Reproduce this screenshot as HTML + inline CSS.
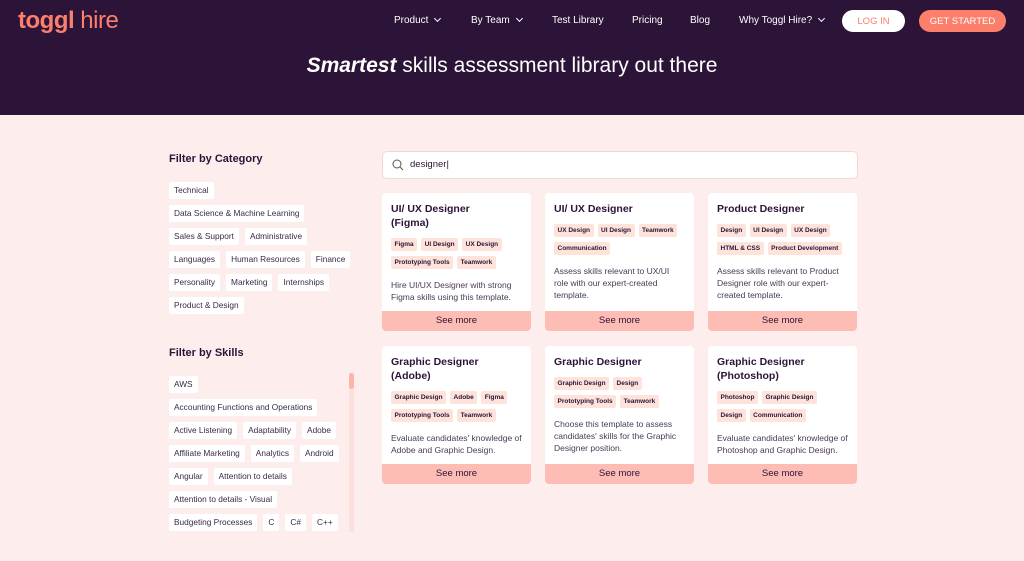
<!DOCTYPE html>
<html><head><meta charset="utf-8">
<style>
*{box-sizing:border-box;margin:0;padding:0}
body{width:1024px;height:561px;overflow:hidden;background:#fdeeed;font-family:"Liberation Sans",sans-serif;color:#2c1338;position:relative}
.hdr{position:absolute;left:0;top:0;width:1024px;height:115px;background:#2c1338}
.logo{position:absolute;left:18px;top:7px;font-size:24px;color:#fc7f6c;letter-spacing:-0.5px}
.logo b{font-weight:900}
.nav{position:absolute;top:15px;font-size:10px;color:#fff}
.chev{display:inline-block;width:5px;height:5px;border-right:1.3px solid #fff;border-bottom:1.3px solid #fff;transform:rotate(45deg);margin-left:7px;position:relative;top:-2px}
.btn{position:absolute;top:10px;height:22px;border-radius:11px;font-size:9.5px;display:flex;align-items:center;justify-content:center}
h1{position:absolute;top:54px;left:0;width:1024px;text-align:center;color:#fff;font-size:21px;font-weight:normal}
h1 i{font-weight:bold}
.fh{position:absolute;left:169px;font-size:11px;font-weight:bold}
.chips{position:absolute;left:169px;display:flex;flex-wrap:wrap;gap:6.5px 6px}
.chip{background:#fff;font-size:8.3px;height:16.5px;line-height:16.5px;padding:0 5px;border-radius:2px;color:#3a2a45}
.search{position:absolute;left:382px;top:151px;width:476px;height:28px;background:#fff;border:1px solid #f5d5d2;border-radius:5px;font-size:9.5px;padding-left:27px;line-height:26px}
.search svg{position:absolute;left:9px;top:7px}
.card{position:absolute;width:149px;height:138px;background:#fff;border-radius:4px;overflow:hidden}
.card h3{font-size:10.5px;line-height:14px;margin:9px 9px 0;font-weight:bold}
.tags{display:flex;flex-wrap:wrap;gap:5px 4px;margin:8px 8px 0 9px}
.tag{background:#fde3da;font-size:6.5px;font-weight:bold;height:13px;line-height:13px;padding:0 3.5px;border-radius:2px}
.card p{font-size:8.5px;line-height:12px;margin:10px 9px 0;color:#4a3a55}
.more{position:absolute;left:0;bottom:0;width:100%;height:20px;background:#fdbdb5;font-size:9.5px;text-align:center;line-height:20px;color:#2c1338}
.skwrap{position:absolute;left:169px;top:376px;width:190px;height:156px;overflow:hidden}
</style></head><body>
<div class="hdr">
<div class="logo"><b>toggl</b> hire</div>
<div class="nav" style="left:394px">Product<span class="chev"></span></div>
<div class="nav" style="left:471px">By Team<span class="chev"></span></div>
<div class="nav" style="left:552px">Test Library</div>
<div class="nav" style="left:632px">Pricing</div>
<div class="nav" style="left:690px">Blog</div>
<div class="nav" style="left:739px">Why Toggl Hire?<span class="chev"></span></div>
<div class="btn" style="left:842px;width:63px;background:#fff;color:#fc7f6c">LOG IN</div>
<div class="btn" style="left:919px;width:87px;background:#fc7f6c;color:#fff">GET STARTED</div>
<h1><i>Smartest</i> skills assessment library out there</h1>
</div>

<div class="fh" style="top:153px">Filter by Category</div>
<div class="chips" style="top:182px;width:182px">
<span class="chip">Technical</span><span class="chip">Data Science &amp; Machine Learning</span><span class="chip">Sales &amp; Support</span><span class="chip">Administrative</span><span class="chip">Languages</span><span class="chip">Human Resources</span><span class="chip">Finance</span><span class="chip">Personality</span><span class="chip">Marketing</span><span class="chip">Internships</span><span class="chip">Product &amp; Design</span>
</div>

<div class="fh" style="top:347px">Filter by Skills</div>
<div class="skwrap"><div class="chips" style="left:0;top:0;width:176px">
<span class="chip">AWS</span><span class="chip">Accounting Functions and Operations</span><span class="chip">Active Listening</span><span class="chip">Adaptability</span><span class="chip">Adobe</span><span class="chip">Affiliate Marketing</span><span class="chip">Analytics</span><span class="chip">Android</span><span class="chip">Angular</span><span class="chip">Attention to details</span><span class="chip">Attention to details - Visual</span><span class="chip">Budgeting Processes</span><span class="chip">C</span><span class="chip">C#</span><span class="chip">C++</span><span class="chip">CSS</span>
</div></div>
<div style="position:absolute;left:349px;top:373px;width:5px;height:159px;background:#fbe0de"></div>
<div style="position:absolute;left:349px;top:373px;width:5px;height:16px;background:#fdb5ab;border-radius:3px"></div>

<div class="search"><svg width="12" height="12" viewBox="0 0 12 12"><circle cx="5" cy="5" r="4" fill="none" stroke="#555" stroke-width="1"/><path d="M8 8L11 11" stroke="#555" stroke-width="1"/></svg>designer|</div>

<div class="card" style="left:382px;top:193px"><h3>UI/ UX Designer<br>(Figma)</h3><div class="tags"><span class="tag">Figma</span><span class="tag">UI Design</span><span class="tag">UX Design</span><span class="tag">Prototyping Tools</span><span class="tag">Teamwork</span></div><p>Hire UI/UX Designer with strong Figma skills using this template.</p><div class="more">See more</div></div>
<div class="card" style="left:545px;top:193px"><h3>UI/ UX Designer</h3><div class="tags"><span class="tag">UX Design</span><span class="tag">UI Design</span><span class="tag">Teamwork</span><span class="tag">Communication</span></div><p>Assess skills relevant to UX/UI role with our expert-created template.</p><div class="more">See more</div></div>
<div class="card" style="left:708px;top:193px"><h3>Product Designer</h3><div class="tags"><span class="tag">Design</span><span class="tag">UI Design</span><span class="tag">UX Design</span><span class="tag">HTML &amp; CSS</span><span class="tag">Product Development</span></div><p>Assess skills relevant to Product Designer role with our expert-created template.</p><div class="more">See more</div></div>
<div class="card" style="left:382px;top:346px"><h3>Graphic Designer<br>(Adobe)</h3><div class="tags"><span class="tag">Graphic Design</span><span class="tag">Adobe</span><span class="tag">Figma</span><span class="tag">Prototyping Tools</span><span class="tag">Teamwork</span></div><p>Evaluate candidates' knowledge of Adobe and Graphic Design.</p><div class="more">See more</div></div>
<div class="card" style="left:545px;top:346px"><h3>Graphic Designer</h3><div class="tags"><span class="tag">Graphic Design</span><span class="tag">Design</span><span class="tag">Prototyping Tools</span><span class="tag">Teamwork</span></div><p>Choose this template to assess candidates' skills for the Graphic Designer position.</p><div class="more">See more</div></div>
<div class="card" style="left:708px;top:346px"><h3>Graphic Designer<br>(Photoshop)</h3><div class="tags"><span class="tag">Photoshop</span><span class="tag">Graphic Design</span><span class="tag">Design</span><span class="tag">Communication</span></div><p>Evaluate candidates' knowledge of Photoshop and Graphic Design.</p><div class="more">See more</div></div>
</body></html>
